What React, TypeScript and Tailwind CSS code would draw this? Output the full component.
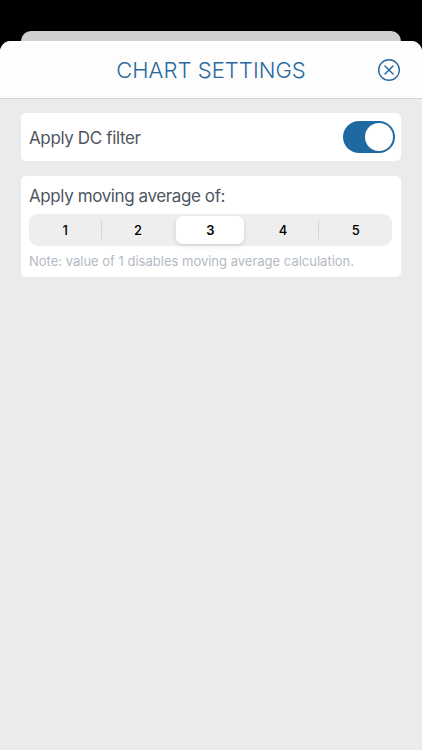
import React, { useState } from 'react'
import clsx from 'clsx'

const AVERAGES = [1, 2, 3, 4, 5]

function CloseIcon() {
  return (
    <svg width="24" height="24" viewBox="0 0 24 24" fill="none" stroke="currentColor" strokeLinecap="round">
      <circle cx="12" cy="12" r="10.3" strokeWidth="1.4" />
      <path d="M8 8l8 8M16 8l-8 8" strokeWidth="1.5" />
    </svg>
  )
}

export default function App() {
  const [dcFilter, setDcFilter] = useState(true)
  const [average, setAverage] = useState(3)

  return (
    <div className="flex h-[750px] w-[422px] flex-col overflow-hidden bg-black pt-[31px] font-['Inter',sans-serif]">
      {/* Edge of the screen underneath the sheet */}
      <div className="mx-[21px] h-5 shrink-0 rounded-t-[10px] bg-[#cfd1d0]" />

      <div className="relative -mt-2.5 flex grow flex-col overflow-hidden rounded-t-[11px] bg-[#eaebed]">
        <header className="flex h-[58px] shrink-0 items-center border-b border-[#d3d4d5] bg-[#fdfdfd] pr-[21px] pl-[45px] text-[#2a6a9f]">
          <h1 className="grow text-center text-[22px] leading-7 font-light tracking-[0.05px] whitespace-nowrap">
            CHART SETTINGS
          </h1>
          <button aria-label="Close">
            <CloseIcon />
          </button>
        </header>

        <main className="flex flex-col gap-[15px] px-[21px] pt-[14px]">
          <section className="flex h-[48px] items-center justify-between rounded-[5px] bg-white pr-[6px] pl-2">
            <span className="pt-[3px] text-[17px] tracking-[-0.37px] text-[#50565f]">Apply DC filter</span>
            <button
              role="switch"
              aria-checked={dcFilter}
              aria-label="Apply DC filter"
              onClick={() => setDcFilter(!dcFilter)}
              className={clsx(
                'flex h-8 w-[52px] items-center rounded-full px-[2px]',
                dcFilter ? 'justify-end bg-[#1f69a3]' : 'justify-start bg-[#d8d9db]'
              )}
            >
              <span className="size-[28px] rounded-full bg-white" />
            </button>
          </section>

          <section className="h-[101px] rounded-[5px] bg-white pt-[6px] pr-[9px] pl-2">
            <h2 className="text-[17px] leading-7 tracking-[-0.4px] text-[#50565f]">Apply moving average of:</h2>
            <div className="mt-[4px] flex h-8 rounded-[9px] bg-[#eeeeee]">
              {AVERAGES.map((value, i) => (
                <button
                  key={value}
                  onClick={() => setAverage(value)}
                  className="relative flex flex-1 items-center justify-center p-[2px] text-[13px] font-medium text-black"
                >
                  {i > 0 && value !== average && value !== average + 1 && (
                    <span className="absolute top-[7px] left-[-1px] h-[18px] w-px bg-[#d5d5d6]" />
                  )}
                  <span
                    className={clsx(
                      'flex h-full w-[68px] items-center justify-center rounded-[7px] pt-px',
                      value === average && 'bg-white font-semibold shadow-[0_2px_5px_rgba(0,0,0,0.12)]'
                    )}
                  >
                    {value}
                  </span>
                </button>
              ))}
            </div>
            <p className="mt-[5px] text-[13px] leading-5 whitespace-nowrap text-[#b3bac3]">
              Note: value of 1 disables moving average calculation.
            </p>
          </section>
        </main>
      </div>
    </div>
  )
}
